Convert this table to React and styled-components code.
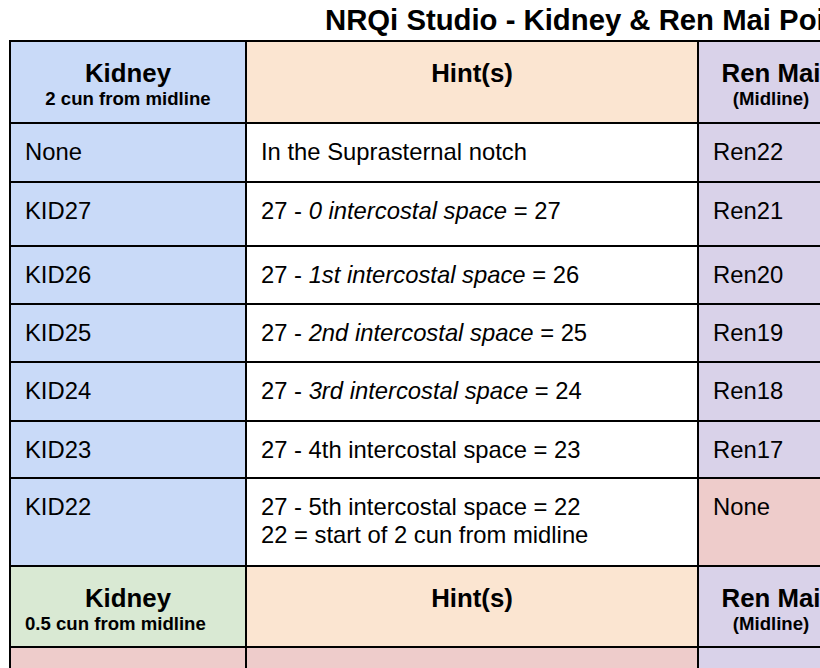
import React from 'react';
import styled, { createGlobalStyle } from 'styled-components';

const GlobalStyle = createGlobalStyle`
  html, body {
    margin: 0;
    padding: 0;
    background: #fff;
    overflow: hidden;
  }
  body {
    font-family: "Liberation Sans", Arial, sans-serif;
    color: #000;
  }
`;

const colors = {
  blue: '#c9daf8',
  orange: '#fbe5d1',
  purple: '#d9d2e9',
  green: '#d9e9d3',
  red: '#eecccb',
  white: '#ffffff',
};

const Page = styled.div`
  width: 820px;
  height: 668px;
  overflow: hidden;
  padding-left: 9px;
  box-sizing: border-box;
`;

const Title = styled.h1`
  margin: 0;
  padding-left: 316px;
  height: 40px;
  line-height: 40px;
  font-size: 29.3px;
  font-weight: 700;
  white-space: nowrap;
`;

const Sheet = styled.div`
  display: grid;
  grid-template-columns: 234px 450px 144px;
  grid-template-rows: 80px 57px 62px 56px 56px 57px 55px 86px 79px 60px;
  gap: 2px;
  padding: 2px;
  background: #000;
  width: max-content;
`;

const Cell = styled.div`
  background: ${p => colors[p.$bg] || colors.white};
  padding: 14px 13px 0 14px;
  font-size: 23.8px;
  line-height: 28px;
  white-space: nowrap;
  overflow: hidden;
`;

const HeadCell = styled.div`
  background: ${p => colors[p.$bg]};
  padding-top: 16px;
  text-align: center;
  white-space: nowrap;
  overflow: hidden;
`;

const HeadTitle = styled.div`
  font-size: 25.8px;
  font-weight: 700;
  line-height: 30px;
`;

const HeadSub = styled.div`
  font-size: 18.6px;
  font-weight: 700;
  line-height: 22px;
  text-align: ${p => (p.$left ? 'left' : 'center')};
  padding-left: ${p => (p.$left ? '14px' : '0')};
`;

const rows = [
  { kid: 'None', hint: ['In the Suprasternal notch'], ren: 'Ren22' },
  { kid: 'KID27', hint: [<>27 - <i>0 intercostal space</i> = 27</>], ren: 'Ren21' },
  { kid: 'KID26', hint: [<>27 - <i>1st intercostal space</i> = 26</>], ren: 'Ren20' },
  { kid: 'KID25', hint: [<>27 - <i>2nd intercostal space</i> = 25</>], ren: 'Ren19' },
  { kid: 'KID24', hint: [<>27 - <i>3rd intercostal space</i> = 24</>], ren: 'Ren18' },
  { kid: 'KID23', hint: ['27 - 4th intercostal space = 23'], ren: 'Ren17' },
  {
    kid: 'KID22',
    hint: ['27 - 5th intercostal space = 22', '22 = start of 2 cun from midline'],
    ren: 'None',
    renBg: 'red',
  },
];

const Header = ({ kidBg, sub, subLeft }) => (
  <>
    <HeadCell $bg={kidBg}>
      <HeadTitle>Kidney</HeadTitle>
      <HeadSub $left={subLeft}>{sub}</HeadSub>
    </HeadCell>
    <HeadCell $bg="orange">
      <HeadTitle>Hint(s)</HeadTitle>
    </HeadCell>
    <HeadCell $bg="purple">
      <HeadTitle>Ren Mai</HeadTitle>
      <HeadSub>(Midline)</HeadSub>
    </HeadCell>
  </>
);

const App = () => {
  return (
    <Page>
      <GlobalStyle />
      <Title>NRQi Studio - Kidney &amp; Ren Mai Points</Title>
      <Sheet>
        <Header kidBg="blue" sub="2 cun from midline" />
        {rows.map(row => (
          <React.Fragment key={row.kid}>
            <Cell $bg="blue">{row.kid}</Cell>
            <Cell $bg="white">
              {row.hint.map((line, i) => <div key={i}>{line}</div>)}
            </Cell>
            <Cell $bg={row.renBg || 'purple'}>{row.ren}</Cell>
          </React.Fragment>
        ))}
        <Header kidBg="green" sub="0.5 cun from midline" subLeft />
        <Cell $bg="red" />
        <Cell $bg="red" />
        <Cell $bg="purple" />
      </Sheet>
    </Page>
  );
};

export default App;
